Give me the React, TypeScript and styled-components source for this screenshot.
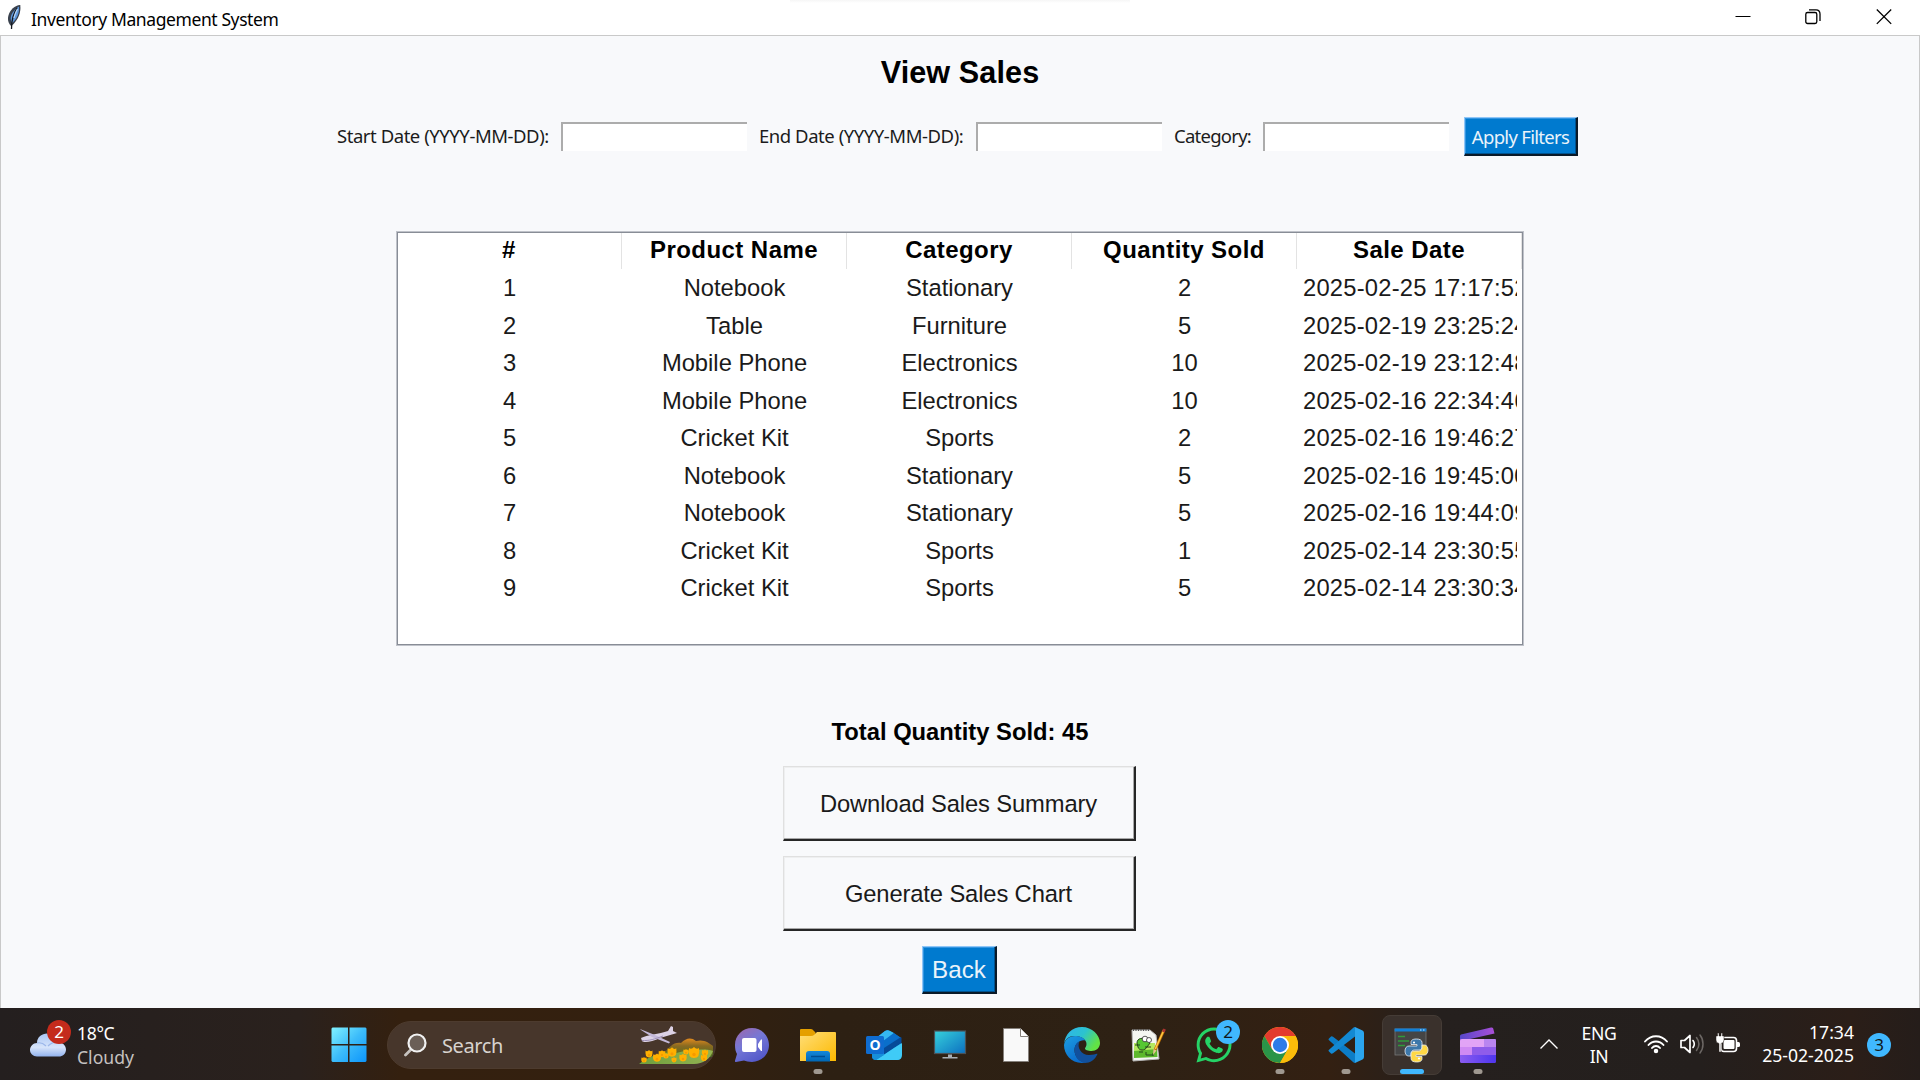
import React from "react";
import styled, { createGlobalStyle } from "styled-components";
import { FaWhatsapp } from "react-icons/fa";

const ui = `"Noto Sans", "Open Sans", sans-serif`;
const arial = `"Liberation Sans", Arial, sans-serif`;

const GlobalStyle = createGlobalStyle`
  * { box-sizing: border-box; }
  body { margin: 0; overflow: hidden; background: #f8f9fb; }
  button, input { font: inherit; margin: 0; padding: 0; border-radius: 0; outline: none; }
`;

const Screen = styled.div`
  width: 1920px;
  height: 1080px;
  display: flex;
  flex-direction: column;
  overflow: hidden;
  font-family: ${ui};
`;

const TitleBar = styled.header`
  height: 36px;
  flex: none;
  display: flex;
  align-items: center;
  padding: 0 0 1px 5px;
  border-bottom: 1px solid #c9c9c9;
  background: linear-gradient(180deg, #f6f6f6, #ffffff 3px) 50% 0 / 340px 3px no-repeat, #ffffff;
`;

const Caption = styled.span`
  flex: 1;
  margin-left: 9px;
  padding-top: 3px;
  font-size: 17.5px;
  line-height: 24px;
  letter-spacing: -0.4px;
  color: #000;
`;

const WindowButton = styled.button<{ $w: number }>`
  width: ${(p) => p.$w}px;
  height: 32px;
  border: 0;
  background: none;
  display: flex;
  align-items: center;
  justify-content: center;
`;

const Body = styled.main`
  flex: 1;
  display: flex;
  flex-direction: column;
  align-items: center;
  background: #f8f9fb;
  border: solid #c9c9c9;
  border-width: 0 1px;
  font-family: ${arial};
  font-size: 23.75px;
  color: #000;
`;

const Heading = styled.h1`
  margin: 18px 0 26px;
  font-size: 30.6px;
  line-height: 36px;
  font-weight: 700;
  letter-spacing: 0.1px;
`;

const Filters = styled.div`
  display: flex;
  align-items: center;
  height: 40px;
  margin-right: 5px;
  font-family: ${ui};
  font-size: 18.5px;
`;

const Label = styled.label<{ $w: number; $tight?: boolean }>`
  width: ${(p) => p.$w}px;
  white-space: nowrap;
  letter-spacing: ${(p) => (p.$tight ? -0.75 : -0.45)}px;
  line-height: 26px;
  color: #1c1c1c;
`;

const Entry = styled.input`
  width: 186px;
  height: 29px;
  margin-right: 12px;
  border: solid;
  border-width: 2px 0 0 2px;
  border-color: #acacac transparent transparent #acacac;
  background: #fff;
`;

const BlueButton = styled.button<{ $w: number; $h: number }>`
  width: ${(p) => p.$w}px;
  height: ${(p) => p.$h}px;
  border: solid;
  border-width: 1px 2px 2px 1px;
  border-color: #8fc6f7 #0a1a28 #0a1a28 #8fc6f7;
  box-shadow: inset -1px -1px 0 #00538f, inset 1px 1px 0 #3395e0;
  background: #007acf;
  color: #eaf3fa;
  white-space: nowrap;
`;

const ApplyButton = styled(BlueButton)`
  margin: 1px 0 0 3px;
  letter-spacing: -0.7px;
`;

const BackButton = styled(BlueButton)`
  margin: 15px 1px 0 0;
  padding-top: 1px;
  font-size: 24.2px;
`;

const Table = styled.div`
  width: 1128px;
  height: 415px;
  margin-top: 75px;
  border: 1px solid #bfc2c9;
  box-shadow: inset 0 0 0 1px #888d96;
  padding: 1px 1px 0 0;
  background: #fff;
`;

const Row = styled.div`
  display: grid;
  grid-template-columns: repeat(5, 225px);
  height: 37.5px;
  line-height: 37.5px;
  text-align: center;
  color: #1a1a1a;
`;

const HeadRow = styled(Row)`
  height: 36px;
  line-height: 34px;
  font-weight: 700;
  font-size: 24px;
  letter-spacing: 0.45px;
  color: #000;
`;

const HeadCell = styled.div`
  border-right: 1.5px solid #e3e3e3;
`;

const Cell = styled.div<{ $date?: boolean }>`
  margin: 0 ${(p) => (p.$date ? "5px 0 6px" : "5px")};
  overflow: hidden;
  white-space: nowrap;
  text-align: ${(p) => (p.$date ? "left" : "center")};
  letter-spacing: ${(p) => (p.$date ? "0.22px" : "0")};
`;

const Total = styled.div`
  margin-top: 68px;
  line-height: 36px;
  font-weight: 700;
`;

const Actions = styled.div`
  display: flex;
  flex-direction: column;
  align-items: center;
  padding-top: 1px;
`;

const ActionButton = styled.button`
  width: 353px;
  height: 75px;
  margin: 15px 2px 0 0;
  padding-top: 2px;
  border: solid;
  border-width: 1px 2px 2px 1px;
  border-color: #e0e0e0 #262626 #262626 #e0e0e0;
  box-shadow: inset -1px -1px 0 #a8a8a8, inset 1px 1px 0 #eeeff0;
  background: #f8f9fb;
  color: #1a1a1a;
  letter-spacing: -0.13px;
`;

const Taskbar = styled.footer`
  height: 72px;
  flex: none;
  display: flex;
  align-items: center;
  padding-top: 2px;
  background: linear-gradient(90deg, #241f1f 0, #2a211d 300px, #34200f 400px, #33200f 700px, #2d2013 830px, #2e2114 1150px, #332012 1330px, #25201e 1440px, #241f1d 1700px, #2b1e18 1850px, #251d1a 1920px);
  color: #fff;
  font-size: 17.6px;
`;

const Weather = styled.div`
  width: 319px;
  padding-left: 30px;
  display: flex;
  align-items: center;
  gap: 11px;
`;

const WeatherText = styled.div`
  font-size: 17.6px;
  line-height: 24px;
  letter-spacing: -0.35px;
`;

const Dim = styled.div`
  color: #c5c2c0;
  letter-spacing: 0;
`;

const Slot = styled.div<{ $active?: boolean }>`
  position: relative;
  width: 60px;
  height: 60px;
  margin-right: 6px;
  border-radius: 8px;
  border: 1px solid ${(p) => (p.$active ? "#453c36" : "transparent")};
  background: ${(p) => (p.$active ? "#3a312c" : "transparent")};
  display: flex;
  align-items: center;
  justify-content: center;
`;

const Indicator = styled.i<{ $active?: boolean }>`
  position: absolute;
  bottom: 0;
  left: 50%;
  transform: translateX(-50%);
  width: ${(p) => (p.$active ? 24 : 9)}px;
  height: 5px;
  border-radius: 3px;
  background: ${(p) => (p.$active ? "#40b8ff" : "#9f9890")};
`;

const Badge = styled.span<{ $red?: boolean }>`
  width: 24px;
  height: 24px;
  border-radius: 12px;
  background: ${(p) => (p.$red ? "#c42b1c" : "#40b8ff")};
  color: ${(p) => (p.$red ? "#fff" : "#101820")};
  font-size: 17px;
  line-height: 24px;
  text-align: center;
`;

const CornerBadge = styled(Badge)<{ $x: number; $y: number }>`
  position: absolute;
  left: ${(p) => p.$x}px;
  top: ${(p) => p.$y}px;
`;

const IconHolder = styled.div`
  position: relative;
  display: flex;
`;

const Search = styled.div`
  width: 329px;
  height: 48px;
  margin: 0 6px 0 2px;
  border-radius: 24px;
  border: 1px solid #4d3b2e;
  background: #47362b;
  display: flex;
  align-items: center;
  overflow: hidden;
  padding-left: 16px;
`;

const SearchText = styled.span`
  flex: 1;
  margin-left: 15px;
  font-size: 20px;
  letter-spacing: -0.4px;
  color: #d8d3cf;
`;

const Tray = styled.div`
  margin-left: auto;
  padding-right: 29px;
  display: flex;
  align-items: center;
`;

const Language = styled.div`
  margin: 0 24px 0 20px;
  width: 42px;
  text-align: center;
  line-height: 23px;
  letter-spacing: -0.3px;
`;

const Status = styled.div`
  display: flex;
  gap: 12px;
  align-items: center;
  padding-bottom: 2px;
`;

const Clock = styled.div`
  margin: 0 13px 0 13px;
  width: 101px;
  text-align: right;
  line-height: 23px;
  white-space: nowrap;
  padding-bottom: 2px;
`;

const Feather = () => (
  <svg width="17" height="26" viewBox="0 0 17 26">
    <path d="M6 22C1.500 18 2 10 7.500 4.500 10.500 2 13 .8 15.300 1 16 8 14 15 6.500 22Z" fill="#3a424e" />
    <path d="M7 19C4 14 6 8 14 2.500 14.500 9 12 15 7 19Z" fill="#5f98dc" />
    <path d="M12 4C8.500 9 6.500 15 6.500 25" stroke="#15191f" strokeWidth="1.300" fill="none" />
    <path d="M12.500 5C11 8 9.500 11 9 14" stroke="#b9d5f5" strokeWidth="1.200" fill="none" />
  </svg>
);

const CloudIcon = () => (
  <svg width="36" height="24" viewBox="0 0 36 24">
    <defs>
      <linearGradient id="cloud" x1="0" y1="0" x2="0" y2="1">
        <stop offset="0" stopColor="#a9c6f5" />
        <stop offset=".6" stopColor="#d7e4fa" />
        <stop offset="1" stopColor="#93b3ee" />
      </linearGradient>
    </defs>
    <path d="M7 10C7 4 12 .5 17 .5 22 .5 26 4 27 9 32 9 36 12 36 16.500 36 21 32.500 23.500 29 23.500H7C3 23.500 0 20.500 0 17S3 10 7 10Z" fill="url(#cloud)" />
    <path d="M7 10C11 9 14 11 16 13M27 9C23 9 20 11 18 13" stroke="#86a5e2" strokeWidth="1.200" fill="none" opacity=".7" />
  </svg>
);

const StartIcon = () => (
  <svg width="36" height="36" viewBox="0 0 36 36">
    <defs>
      <linearGradient id="win" gradientUnits="userSpaceOnUse" x1="0" y1="0" x2="36" y2="36">
        <stop offset="0" stopColor="#83f4ff" />
        <stop offset=".5" stopColor="#3cbcfa" />
        <stop offset="1" stopColor="#0a93fb" />
      </linearGradient>
    </defs>
    <path d="M1.500.5H17V17H.5V1.500ZM18.500.5H34.500L35.500 1.500V17H18.500ZM.5 18.500H17V35H1.500L.5 34ZM18.500 18.500H35.500V34L34.500 35H18.500Z" fill="url(#win)" />
  </svg>
);

const SearchIcon = () => (
  <svg width="23" height="24" viewBox="0 0 23 24">
    <path d="M8 15.500 1.500 22" stroke="#c6c2bf" strokeWidth="2.800" strokeLinecap="round" />
    <circle cx="13" cy="10" r="8.500" fill="#6b5f57" stroke="#f1f1f1" strokeWidth="2.200" />
  </svg>
);

const blooms = [
  [5, 35, 2.6], [10, 29, 3.4], [18, 33, 3.8], [23, 29, 3.2], [27, 31, 2.6], [33, 27.500, 4.3],
  [35, 35, 2.4], [44, 33, 3.5], [47, 27, 2.6], [55, 28, 5], [66, 28, 3], [65, 33, 3],
];

const SpringArt = () => (
  <svg width="76" height="40" viewBox="0 0 76 40">
    <defs>
      <linearGradient id="hill" x1="0" y1="0" x2="0" y2="1">
        <stop offset="0" stopColor="#e08a1e" />
        <stop offset=".4" stopColor="#8a6a20" />
        <stop offset="1" stopColor="#4c6d24" />
      </linearGradient>
      <linearGradient id="grass" x1="0" y1="0" x2="1" y2="0">
        <stop offset="0" stopColor="#6f9f3e" />
        <stop offset="1" stopColor="#93b352" />
      </linearGradient>
    </defs>
    <path d="M24 29C31 22 34 17 42 18 47 13 52 12 57 16 65 14 70 18 74 21V32H24Z" fill="url(#hill)" />
    <path d="M0 39C12 30 25 26 37 28 50 25 65 23 74 26 71 34 64 39 55 39Z" fill="url(#grass)" />
    {blooms.map(([x, y, r], i) => (
      <g key={i}>
        <path d={`M${x - r} ${y - r}Q${x - r / 2} ${y - r * 0.6} ${x} ${y - r * 1.2}Q${x + r / 2} ${y - r * 0.6} ${x + r} ${y - r}Q${x + r * 1.3} ${y + r} ${x} ${y + r}Q${x - r * 1.3} ${y + r} ${x - r} ${y - r}Z`} fill="#ffb000" />
        <circle cx={x} cy={y + r * 0.3} r={r * 0.35} fill="#f59a00" />
      </g>
    ))}
    <path d="M2 13C8 10 20 9 29 6L32 1 34 2 34 6 38 8 21 13C13 17 5 18 3 16Z" fill="#dcd2e6" />
    <path d="M1 4 16 10 31 17 30 18.500 13 12 2 5Z" fill="#c3b8d8" />
    <path d="M3 15.500C10 16 16 14 24 11" stroke="#9e90b6" fill="none" />
  </svg>
);

const ChatIcon = () => (
  <svg width="36" height="36" viewBox="0 0 36 36">
    <defs>
      <linearGradient id="chat" x1=".1" y1="0" x2=".7" y2="1">
        <stop offset="0" stopColor="#9c69ae" />
        <stop offset=".45" stopColor="#7578d6" />
        <stop offset="1" stopColor="#5257c9" />
      </linearGradient>
    </defs>
    <path d="M18 1C27.500 1 35 8.500 35 18S27.500 35 18 35C14.500 35 12 34 10 33.500L2 35C.5 35 .8 34 1.500 32L3 27C1.500 24.500 1 21.500 1 18 1 8.500 8.500 1 18 1Z" fill="url(#chat)" />
    <rect x="8" y="11" width="14.500" height="14" rx="2" fill="#fff" />
    <path d="M24 17 27 12.500H28V24H27L24 20Z" fill="#fff" />
  </svg>
);

const FolderIcon = () => (
  <svg width="36" height="36" viewBox="0 0 36 36">
    <defs>
      <linearGradient id="folder" x1="0" y1="0" x2="1" y2="1">
        <stop offset="0" stopColor="#ffde78" />
        <stop offset="1" stopColor="#fcb900" />
      </linearGradient>
      <linearGradient id="folderTab" x1="0" y1="0" x2="0" y2="1">
        <stop offset="0" stopColor="#1587da" />
        <stop offset="1" stopColor="#0067b5" />
      </linearGradient>
    </defs>
    <path d="M0 3Q0 2 1 2H11Q12.500 2 14 4L15.500 5.500V12H0Z" fill="#e5a000" />
    <path d="M0 9H11Q13 9 14 8L17 5H35Q36 5 36 6V34H0Z" fill="url(#folder)" />
    <path d="M6 34.500V27Q6 24 9 24H27Q30 24 30 27V34.500Z" fill="url(#folderTab)" />
    <path d="M11 29.500H25" stroke="#004d91" strokeWidth="1.500" />
  </svg>
);

const LetterO = styled.span`
  position: absolute;
  left: 0;
  top: 7px;
  width: 18px;
  font: 700 14px/18px "Open Sans", sans-serif;
  text-align: center;
  color: #fff;
`;

const OutlookIcon = () => (
  <IconHolder>
    <svg width="36" height="32" viewBox="0 0 36 32">
      <path d="M6 12 19 2Q21.500.5 24 2L35 9V26Q35 31 31 31H10Q6 31 6 27Z" fill="#1490df" />
      <path d="M9 10 19 2Q21.500.5 24 2L28 4 14 15Z" fill="#35b8f1" />
      <path d="M28 4 35 9 18 21 13 15Z" fill="#0a6fcb" />
      <path d="M35.500 9V14L18 26V19L35 8Z" fill="#064a99" />
      <path d="M36 14V26Q36 31 31 31H10L28 19Z" fill="#3fcbf7" />
      <path d="M6 21 18 26 10 31Q6 31 6 27Z" fill="#168ed9" />
      <rect x="0" y="7" width="18" height="18" rx="1.500" fill="#0f6cd0" />
    </svg>
    <LetterO>O</LetterO>
  </IconHolder>
);

const MonitorIcon = () => (
  <svg width="34" height="32" viewBox="0 0 34 32">
    <defs>
      <linearGradient id="screen" x1="0" y1="0" x2="1" y2="1">
        <stop offset="0" stopColor="#36d1dc" />
        <stop offset="1" stopColor="#0c6fc0" />
      </linearGradient>
    </defs>
    <rect x="1.500" y="2" width="31" height="22.500" fill="url(#screen)" stroke="#4a5258" strokeWidth="1.200" />
    <path d="M15 25.500H19V28H24.500V29.500H9.500V28H15Z" fill="#a7adb3" />
  </svg>
);

const FileIcon = () => (
  <svg width="28" height="34" viewBox="0 0 28 34">
    <path d="M1.500.5H18.500L26.500 8.500V33.500H1.500Z" fill="#f9f9f9" stroke="#85807b" />
    <path d="M18.500.5V8.500H26.500" fill="#fff" stroke="#85807b" />
  </svg>
);

const EdgeIcon = () => (
  <svg width="36" height="36" viewBox="0 0 36 36">
    <defs>
      <linearGradient id="edgeTop" x1="0" y1="0" x2="1" y2=".5">
        <stop offset="0" stopColor="#2fb3ee" />
        <stop offset=".55" stopColor="#2cc3cf" />
        <stop offset="1" stopColor="#62e345" />
      </linearGradient>
      <linearGradient id="edgeLow" x1="0" y1="0" x2=".6" y2="1">
        <stop offset="0" stopColor="#1b9de2" />
        <stop offset="1" stopColor="#0b6bcb" />
      </linearGradient>
    </defs>
    <path d="M0 17C1 7 8 0 18 0S36 8 36 16C36 21 32 24 27.500 24 24 24 21 23 21 21.500 21 20.500 22.500 20 22.500 17 22.500 12.500 17 9 10.500 9 5 9 1 12.500 0 17Z" fill="url(#edgeTop)" />
    <path d="M0 18C1 12.500 5 9 11 9 15 9 19 10 21.500 13.500 17 12 10.500 16 10.500 23 10.500 30 16 35 22 35.500 9 38 0 28.500 0 18Z" fill="url(#edgeLow)" />
    <path d="M10.500 23C10.500 18 13 15.500 15.500 14.500 12.500 20 17 28 25 28 30 28 33 26 33.500 27 31 33 26 36 21 36 15 35 10.500 30 10.500 23Z" fill="#11509d" />
  </svg>
);

const NotepadIcon = () => (
  <svg width="36" height="36" viewBox="0 0 36 36">
    <path d="M2 3H20L26 8 29 32 3 34Z" fill="#f4f6f2" stroke="#b5b5b5" />
    <path d="M3 3H20" stroke="#555" strokeWidth="2" strokeDasharray="1 1.500" />
    <path d="M4 16H25L27 29 4 30Z" fill="#b4e860" />
    <path d="M4 24 27 22 27.500 30 4 31Z" fill="#5db82c" />
    <path d="M7 16C7 11 13 10 17 13L20 16 17 20C15 24 9 24 8 20Z" fill="#56c632" stroke="#254519" />
    <circle cx="15" cy="12" r="2.800" fill="#fff" stroke="#333" strokeWidth=".8" />
    <circle cx="19" cy="13" r="2.500" fill="#fff" stroke="#333" strokeWidth=".8" />
    <path d="M5 18H10M15 20H21M9 25H13M16 25V28H23M23 26V29" stroke="#23441c" fill="none" />
    <path d="M25 23 34 3" stroke="#b96a00" strokeWidth="3" />
    <path d="M25.300 22 33.500 4" stroke="#ffc845" strokeWidth="1.600" />
    <path d="M33.300 5 34.600 2" stroke="#a33" strokeWidth="2.600" />
    <path d="M23 28 23.500 22 26.500 23.500Z" fill="#e5c58e" />
  </svg>
);

const ChromeIcon = () => (
  <svg width="36" height="36" viewBox="0 0 36 36">
    <circle cx="18" cy="18" r="18" fill="#fbbc0a" />
    <path d="M18 18 10.200 22.500 2.400 9A18 18 0 0 1 33.600 9H18Z" fill="#e33b2e" />
    <path d="M2.400 9A18 18 0 0 0 18 36L25.800 22.500 10.200 22.500Z" fill="#2a9448" />
    <path d="M18 9H33.600A18 18 0 0 1 18 36L25.800 22.500Z" fill="#fbbc0a" />
    <circle cx="18" cy="18" r="9" fill="#fff" />
    <circle cx="18" cy="18" r="7.200" fill="#2c7be8" />
  </svg>
);

const CodeIcon = () => (
  <svg width="36" height="36" viewBox="0 0 36 36">
    <path d="M1 11.500 3 9.500Q4 9 5 9.700L27 26.500V36Q26 36 25 35L.8 13Q0 12.200 1 11.500Z" fill="#0c7dc7" />
    <path d="M1 24.500 3 26.500Q4 27 5 26.300L27 9.500V0Q26 0 25 1L.8 23Q0 23.800 1 24.500Z" fill="#1389d3" />
    <path d="M27 0 34.500 3.500Q36 4.300 36 6V30Q36 31.700 34.500 32.500L27 36Z" fill="#2ba5ee" />
  </svg>
);

const PythonIcon = () => (
  <svg width="36" height="36" viewBox="0 0 36 36">
    <rect x="1" y="2" width="31" height="26" fill="#454545" stroke="#777" strokeWidth=".8" />
    <path d="M.6 1.500H32.400V4.500H.6Z" fill="#1180d8" />
    <path d="M26 3H27.500M29 3H30.500" stroke="#cfe6fa" />
    <path d="M4 9.500H11M4 14H15M4 18.500H11" stroke="#319a3a" strokeWidth="1.300" />
    <g transform="translate(10.5 11.5)" stroke="#e8eef4" strokeWidth=".8">
      <path d="M12 .5C7 .5 6.500 2.500 6.500 4V6H12.500V7.500H4.500C2 7.500.5 9.500.5 12.500S2 17.500 4 17.500H6.500V15C6.500 13 8 11.500 10 11.500H14.500C16.500 11.500 17.500 10 17.500 8.500V4C17.500 1.500 15 .5 12 .5Z" fill="#3d78aa" />
      <path d="M12 23.500C17 23.500 17.500 21.500 17.500 20V18H11.500V16.500H19.500C22 16.500 23.500 14.500 23.500 11.500S22 6.500 20 6.500H17.500V9C17.500 11 16 12.500 14 12.500H9.500C7.500 12.500 6.500 14 6.500 15.500V20C6.500 22.500 9 23.500 12 23.500Z" fill="#ffd845" />
    </g>
    <circle cx="20" cy="15.500" r="1.100" fill="#fff" />
    <circle cx="25" cy="31.500" r="1.100" fill="#fff" />
  </svg>
);

const ClipIcon = () => (
  <svg width="36" height="36" viewBox="0 0 36 36">
    <defs>
      <linearGradient id="clipTop" x1="0" y1="0" x2="1" y2="0">
        <stop offset="0" stopColor="#5747c9" />
        <stop offset="1" stopColor="#a94fd8" />
      </linearGradient>
      <linearGradient id="clipLow" x1="0" y1="0" x2="1" y2="0">
        <stop offset="0" stopColor="#8a5cf0" />
        <stop offset="1" stopColor="#4e35ee" />
      </linearGradient>
    </defs>
    <path d="M1 7.500 31 .5Q32.500 0 33.200 1.500L34.500 6.500 10 12H0V9Q0 8 1 7.500Z" fill="url(#clipTop)" />
    <path d="M0 12H35Q36 12 36 13.500V34Q36 36 34 36H2Q0 36 0 34Z" fill="#8a52e4" />
    <path d="M0 14Q0 12 2 12H24V20H0Z" fill="#e2a4f6" />
    <path d="M24 12H35Q36 12 36 14V20H24Z" fill="#b985f0" />
    <path d="M0 20H12V28H0Z" fill="#cf8af3" />
    <path d="M12 20H36V28H12Z" fill="#8f5cea" />
    <path d="M0 28H36V34Q36 36 34 36H2Q0 36 0 34Z" fill="url(#clipLow)" />
  </svg>
);

const WifiIcon = () => (
  <svg width="24" height="20" viewBox="0 0 24 20" fill="none" stroke="#fff" strokeWidth="1.900" strokeLinecap="round">
    <path d="M1 7.500C7 .5 17 .5 23 7.500M4.500 11C8.500 6.300 15.500 6.300 19.500 11M8 14C10.200 11.300 13.800 11.300 16 14" />
    <circle cx="12" cy="17" r="1.300" fill="#fff" />
  </svg>
);

const SoundIcon = () => (
  <svg width="24" height="22" viewBox="0 0 24 22" fill="none" strokeLinecap="round">
    <path d="M1 7.500H4.500L10 2.500V19.500L4.500 14.500H1Z" stroke="#fff" strokeWidth="1.700" strokeLinejoin="round" />
    <path d="M13 7.500C14.500 9.500 14.500 12.500 13 14.500" stroke="#fff" strokeWidth="1.600" />
    <path d="M16.500 4.500C19.500 8.500 19.500 13.500 16.500 17.500M20 2C24 7 24 15 20 20" stroke="#6c6764" strokeWidth="1.500" />
  </svg>
);

const BatteryIcon = () => (
  <svg width="24" height="22" viewBox="0 0 24 22">
    <rect x="5" y="4.500" width="15.500" height="14" rx="3" fill="none" stroke="#fff" strokeWidth="1.600" />
    <rect x="7.500" y="7" width="11" height="9" rx="1" fill="#fff" />
    <path d="M21 9H22.500Q24 9 24 10.500V12.500Q24 14 22.500 14H21Z" fill="#fff" />
    <path d="M0 3H1.500V0H3V3H5V0H6.500V3H8V7Q8 10 5 10.500V19H3V10.500Q0 10 0 7Z" fill="#fff" stroke="#28211e" strokeWidth=".5" />
  </svg>
);

const rows = [
  ["1", "Notebook", "Stationary", "2", "2025-02-25 17:17:52"],
  ["2", "Table", "Furniture", "5", "2025-02-19 23:25:24"],
  ["3", "Mobile Phone", "Electronics", "10", "2025-02-19 23:12:48"],
  ["4", "Mobile Phone", "Electronics", "10", "2025-02-16 22:34:46"],
  ["5", "Cricket Kit", "Sports", "2", "2025-02-16 19:46:27"],
  ["6", "Notebook", "Stationary", "5", "2025-02-16 19:45:00"],
  ["7", "Notebook", "Stationary", "5", "2025-02-16 19:44:09"],
  ["8", "Cricket Kit", "Sports", "1", "2025-02-14 23:30:55"],
  ["9", "Cricket Kit", "Sports", "5", "2025-02-14 23:30:34"],
];

const headers = ["#", "Product Name", "Category", "Quantity Sold", "Sale Date"];

export default function App() {
  return (
    <Screen>
      <GlobalStyle />
      <TitleBar>
        <Feather />
        <Caption>Inventory Management System</Caption>
        <WindowButton $w={70} aria-label="Minimize">
          <svg width="16" height="16"><path d="M.5 7.500H15.500" stroke="#000" /></svg>
        </WindowButton>
        <WindowButton $w={70} aria-label="Restore">
          <svg width="16" height="16" fill="none" stroke="#000" strokeWidth="1.300">
            <rect x=".8" y="3.500" width="11" height="11" rx="1.800" />
            <path d="M4 .8H11Q15 .8 15 5V12" />
          </svg>
        </WindowButton>
        <WindowButton $w={72} aria-label="Close">
          <svg width="16" height="16"><path d="M.8.5 15.200 14.900M15.200.5.8 14.900" stroke="#000" strokeWidth="1.300" /></svg>
        </WindowButton>
      </TitleBar>

      <Body>
        <Heading>View Sales</Heading>
        <Filters>
          <Label $w={224}>Start Date (YYYY-MM-DD):</Label>
          <Entry />
          <Label $w={217}>End Date (YYYY-MM-DD):</Label>
          <Entry />
          <Label $w={89} $tight>Category:</Label>
          <Entry />
          <ApplyButton $w={114} $h={39}>Apply Filters</ApplyButton>
        </Filters>

        <Table>
          <HeadRow>
            {headers.map((h) => <HeadCell key={h}>{h}</HeadCell>)}
          </HeadRow>
          {rows.map((r) => (
            <Row key={r[0]}>
              {r.map((c, i) => <Cell key={i} $date={i === 4}>{c}</Cell>)}
            </Row>
          ))}
        </Table>

        <Total>Total Quantity Sold: 45</Total>
        <Actions>
          <ActionButton>Download Sales Summary</ActionButton>
          <ActionButton>Generate Sales Chart</ActionButton>
          <BackButton $w={75} $h={48}>Back</BackButton>
        </Actions>
      </Body>

      <Taskbar>
        <Weather>
          <IconHolder>
            <CloudIcon />
            <CornerBadge $red $x={17} $y={-13}>2</CornerBadge>
          </IconHolder>
          <WeatherText>
            <div>18°C</div>
            <Dim>Cloudy</Dim>
          </WeatherText>
        </Weather>
        <Slot><StartIcon /></Slot>
        <Search>
          <SearchIcon />
          <SearchText>Search</SearchText>
          <SpringArt />
        </Search>
        <Slot><ChatIcon /></Slot>
        <Slot><FolderIcon /><Indicator /></Slot>
        <Slot><OutlookIcon /></Slot>
        <Slot><MonitorIcon /></Slot>
        <Slot><FileIcon /></Slot>
        <Slot><EdgeIcon /></Slot>
        <Slot><NotepadIcon /></Slot>
        <Slot>
          <FaWhatsapp size={40} color="#25d366" />
          <CornerBadge $x={31} $y={4}>2</CornerBadge>
        </Slot>
        <Slot><ChromeIcon /><Indicator /></Slot>
        <Slot><CodeIcon /><Indicator /></Slot>
        <Slot $active><PythonIcon /><Indicator $active /></Slot>
        <Slot><ClipIcon /><Indicator /></Slot>
        <Tray>
          <svg width="18" height="12" viewBox="0 0 18 12"><path d="M.5 9.500 9 1 17.500 9.500" fill="none" stroke="#fff" strokeWidth="1.400" /></svg>
          <Language>
            <div>ENG</div>
            <div>IN</div>
          </Language>
          <Status><WifiIcon /><SoundIcon /><BatteryIcon /></Status>
          <Clock>
            <div>17:34</div>
            <div>25-02-2025</div>
          </Clock>
          <Badge>3</Badge>
        </Tray>
      </Taskbar>
    </Screen>
  );
}
